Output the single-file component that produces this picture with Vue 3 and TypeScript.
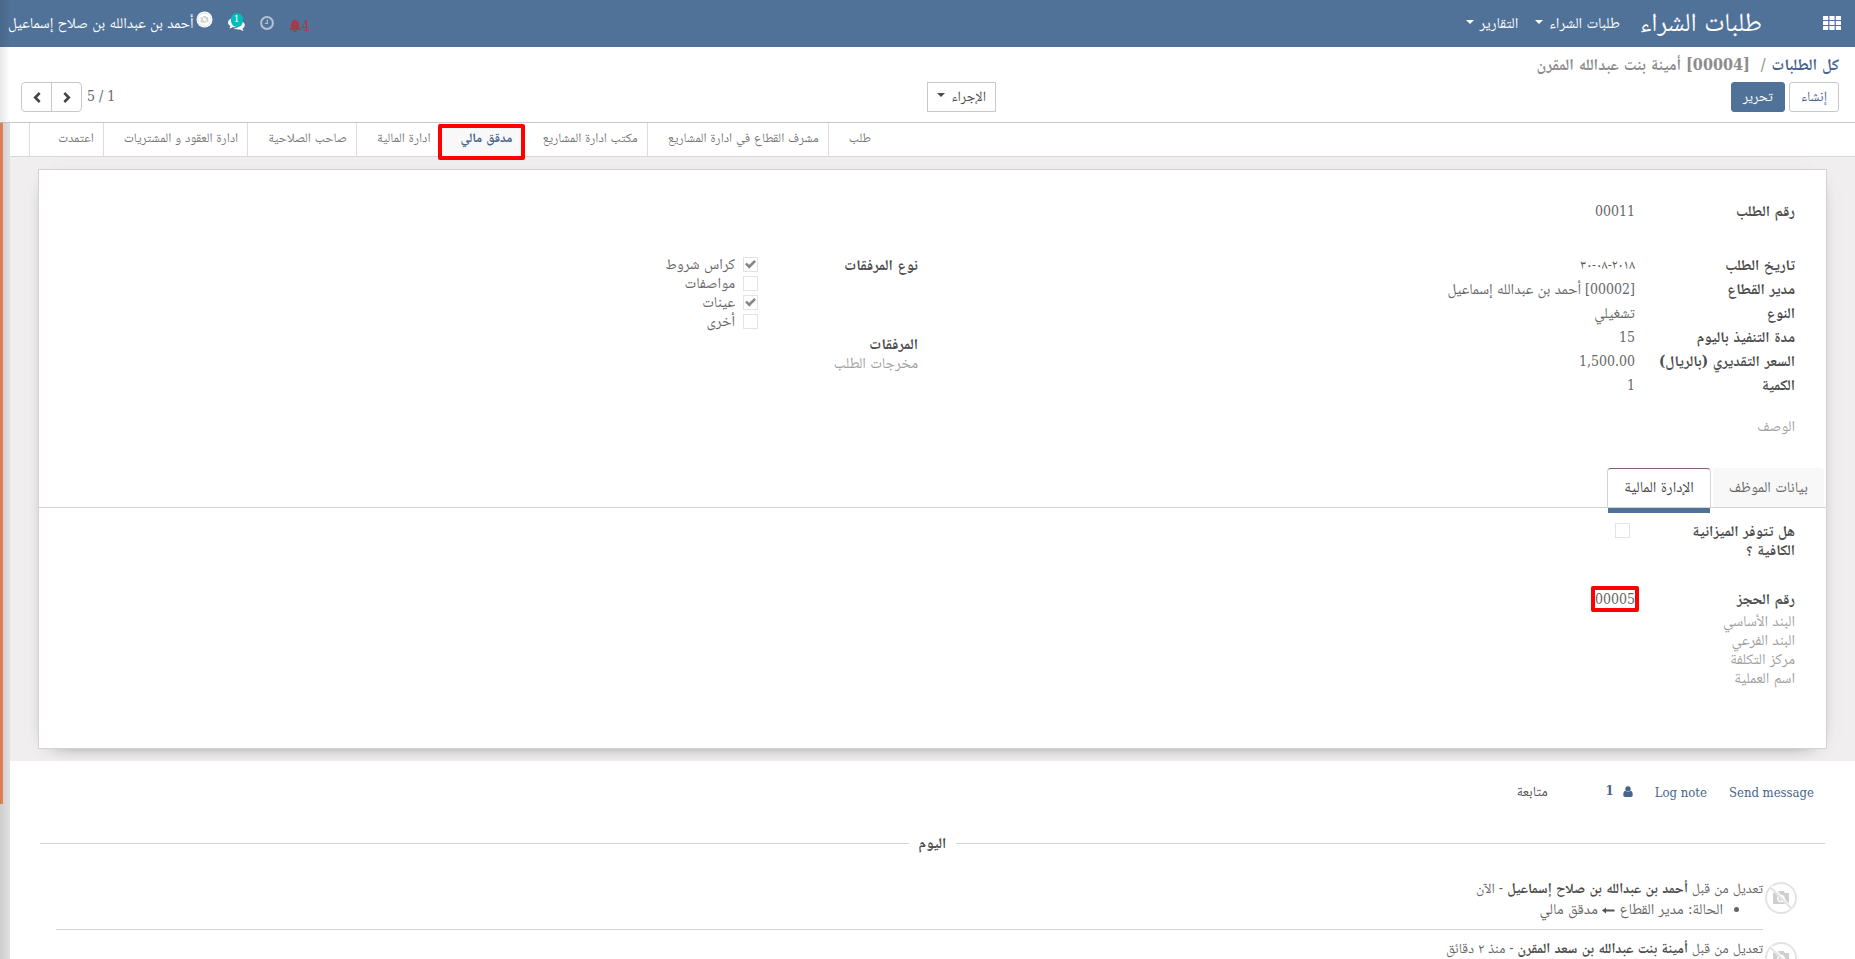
<script setup lang="ts">
interface Row { label: string; value: string; code?: string; kind?: 'num' | 'date' }
interface Stage { name: string; active?: boolean }
interface Message { author: string; when: string; from?: string; to?: string }

const menus: string[] = ['طلبات الشراء', 'التقارير']

const stages: Stage[] = [
  { name: 'طلب' },
  { name: 'مشرف القطاع في ادارة المشاريع' },
  { name: 'مكتب ادارة المشاريع' },
  { name: 'مدقق مالي', active: true },
  { name: 'ادارة المالية' },
  { name: 'صاحب الصلاحية' },
  { name: 'ادارة العقود و المشتريات' },
  { name: 'اعتمدت' },
]

const details: Row[] = [
  { label: 'تاريخ الطلب', value: '٢٠١٨-٠٨-٣٠', kind: 'date' },
  { label: 'مدير القطاع', code: '[00002]', value: 'أحمد بن عبدالله إسماعيل' },
  { label: 'النوع', value: 'تشغيلي' },
  { label: 'مدة التنفيذ باليوم', value: '15', kind: 'num' },
  { label: 'السعر التقديري (بالريال)', value: '1,500.00', kind: 'num' },
  { label: 'الكمية', value: '1', kind: 'num' },
]

const attachments = [
  { id: 'att-terms', label: 'كراس شروط', checked: true },
  { id: 'att-specs', label: 'مواصفات', checked: false },
  { id: 'att-samples', label: 'عينات', checked: true },
  { id: 'att-other', label: 'أخرى', checked: false },
]

const emptyFields: string[] = ['البند الأساسي', 'البند الفرعي', 'مركز التكلفة', 'اسم العملية']

const messages: Message[] = [
  { author: 'أحمد بن عبدالله بن صلاح إسماعيل', when: 'الآن', from: 'مدير القطاع', to: 'مدقق مالي' },
  { author: 'أمينة بنت عبدالله بن سعد المقرن', when: 'منذ ٢ دقائق' },
]
</script>

<template>
  <div class="page" dir="rtl">
    <header class="navbar">
      <button class="icon-btn apps" aria-label="التطبيقات">
        <svg width="18" height="14" viewBox="0 0 18 14" fill="#fff">
          <template v-for="r in 3" :key="r">
            <rect v-for="c in 3" :key="c" :x="(c - 1) * 6.4" :y="(r - 1) * 5" width="5.2" height="4" rx="0.6" />
          </template>
        </svg>
      </button>
      <a class="brand" href="#">طلبات الشراء</a>
      <nav class="menus">
        <a v-for="m in menus" :key="m" href="#">{{ m }}<i class="caret"></i></a>
      </nav>
      <div class="systray">
        <button class="icon-btn bell" aria-label="التنبيهات">
          <span>4</span>
          <svg width="12" height="14" viewBox="0 0 12 14" fill="#a8384b">
            <path d="M6 0.3c.6 0 .9.4.9.9C9 1.7 9.9 3.300 9.900 5c0 3 .8 4.700 2.100 6.100H0C1.300 9.700 2.100 8 2.100 5 2.100 3.300 3 1.700 5.100 1.200 5.100.7 5.400.3 6 .3zM4.200 11.600h3.600c0 1.200-.8 2-1.800 2s-1.800-.8-1.800-2z" />
          </svg>
        </button>
        <button class="icon-btn" aria-label="الأنشطة">
          <svg width="14" height="14" viewBox="0 0 14 14" fill="none" stroke="#b3c2d3">
            <circle cx="7" cy="7" r="5.900" stroke-width="2" />
            <path d="M7.300 3.500v4H4.800" stroke-width="1.200" />
          </svg>
        </button>
        <button class="icon-btn chats" aria-label="المحادثات">
          <svg width="17" height="15" viewBox="0 0 17 15" fill="#fff">
            <path d="M6.500 1C10 1 12.800 3 12.800 5.600S10 10.200 6.500 10.200c-.6 0-1.200 0-1.700-.2-1 .8-2.200 1.300-3.600 1.400.6-.6 1.100-1.400 1.200-2.300C.9 8.300 0 7 0 5.600 0 3 3 1 6.500 1z" />
            <path d="M14.200 4.500c1.500.8 2.600 2.100 2.600 3.600 0 1.400-.9 2.600-2.300 3.400.1.900.6 1.700 1.200 2.300-1.400-.1-2.600-.6-3.600-1.400-2.500.5-5-.1-6.500-1.300 4.700 0 8.600-2.400 8.600-6.600z" />
          </svg>
          <span class="count">1</span>
        </button>
        <button class="icon-btn user">
          <svg width="17" height="17" viewBox="0 0 17 17">
            <circle cx="8.500" cy="8.500" r="8" fill="#fff" />
            <circle cx="8.500" cy="8.500" r="6.500" fill="none" stroke="#e6e6e6" />
            <path d="M4.700 6h2l.8-1h2l.8 1h2v5.500H4.700z" fill="#cfcfcf" />
            <circle cx="8.500" cy="8.500" r="1.700" fill="#f5f5f5" />
            <path d="M4.500 4l8 8.500" stroke="#fff" />
          </svg>
          <span>أحمد بن عبدالله بن صلاح إسماعيل</span>
        </button>
      </div>
    </header>

    <section class="control">
      <ol class="crumbs">
        <li><a href="#">كل الطلبات</a></li>
        <li>[00004] أمينة بنت عبدالله المقرن</li>
      </ol>
      <div class="toolbar">
        <div class="side start">
          <button class="btn">إنشاء</button>
          <button class="btn primary">تحرير</button>
        </div>
        <button class="btn action">الإجراء<i class="caret"></i></button>
        <div class="side end">
          <span class="pages">1 / 5</span>
          <div class="pager">
            <button aria-label="السابق">
              <svg width="8" height="11" viewBox="0 0 8 11" fill="none" stroke="#444" stroke-width="2.600"><path d="M1.300 1l4.500 4.500L1.300 10" /></svg>
            </button>
            <button aria-label="التالي">
              <svg width="8" height="11" viewBox="0 0 8 11" fill="none" stroke="#444" stroke-width="2.600"><path d="M6.700 1L2.200 5.500l4.500 4.500" /></svg>
            </button>
          </div>
        </div>
      </div>
    </section>

    <div class="body">
      <main class="content">
        <div class="statusbar">
          <button v-for="s in stages" :key="s.name" class="stage" :class="{ active: s.active }">
            {{ s.name }}<span v-if="s.active" class="mark"></span>
          </button>
        </div>

        <div class="sheet-bg">
          <div class="sheet">
            <div class="fields">
              <div class="row first"><b>رقم الطلب</b><span class="num">00011</span></div>
              <div class="cols">
                <div>
                  <div v-for="d in details" :key="d.label" class="row">
                    <b>{{ d.label }}</b>
                    <span :class="d.kind"><span v-if="d.code" class="num">{{ d.code }}&nbsp;</span>{{ d.value }}</span>
                  </div>
                </div>
                <div>
                  <div class="row kinds">
                    <b>نوع المرفقات</b>
                    <div class="checks">
                      <div v-for="a in attachments" :key="a.id" class="check">
                        <input :id="a.id" type="checkbox" :checked="a.checked" />
                        <label :for="a.id">{{ a.label }}</label>
                      </div>
                    </div>
                  </div>
                  <div class="tight"><b>المرفقات</b></div>
                  <div class="tight muted">مخرجات الطلب</div>
                </div>
              </div>
              <div class="row description"><span class="muted">الوصف</span></div>
            </div>

            <div class="tabs" role="tablist">
              <button role="tab" aria-selected="false">بيانات الموظف</button>
              <button role="tab" aria-selected="true" class="current">الإدارة المالية</button>
            </div>

            <div class="panel">
              <div class="row question">
                <label for="budget">هل تتوفر الميزانية الكافية ؟</label>
                <input id="budget" type="checkbox" />
              </div>
              <div class="row booking"><b>رقم الحجز</b><span class="num"><span class="boxed">00005<i class="mark"></i></span></span></div>
              <div v-for="f in emptyFields" :key="f" class="tight muted">{{ f }}</div>
            </div>
          </div>
        </div>

        <section class="chatter">
          <div class="chat-bar">
            <button class="link">Send message</button>
            <button class="link">Log note</button>
            <button class="link followers">
              <svg width="10" height="11" viewBox="0 0 10 11" fill="#46648c">
                <circle cx="5" cy="2.900" r="2.700" />
                <path d="M2.300 4.800c1.500 1.500 3.900 1.500 5.400 0C9.300 5.200 9.700 6.800 9.700 9c0 1.200-.7 1.900-1.800 1.900H2.100C1 10.900.3 10.200.3 9c0-2.200.4-3.800 2-4.200z" />
              </svg>
              <span>1</span>
            </button>
            <button class="link follow">متابعة</button>
          </div>
          <div class="divider"><b>اليوم</b></div>
          <article v-for="m in messages" :key="m.author" class="message">
            <svg class="avatar" width="32" height="32" viewBox="0 0 32 32">
              <circle cx="16" cy="16" r="15" fill="#fff" stroke="#e3e3e3" stroke-width="2" />
              <path d="M8 11h4l1.500-2h5l1.500 2h4v11H8z" fill="#cfcfcf" />
              <circle cx="16" cy="16.500" r="3.800" fill="#fff" />
              <circle cx="16" cy="16.500" r="2.400" fill="#cfcfcf" />
              <path d="M6 4.500L27 27" stroke="#fff" stroke-width="3" />
              <path d="M5.200 5.200L26.800 26.800" stroke="#e3e3e3" stroke-width="2" />
            </svg>
            <div class="text">
              <p>تعديل من قبل <b>{{ m.author }}</b> - {{ m.when }}</p>
              <ul v-if="m.from">
                <li>الحالة: {{ m.from }}
                  <svg width="13" height="7" viewBox="0 0 13 7" fill="#555"><path d="M0 3.500L4 .5v2h8.500v2H4v2z" /></svg>
                  {{ m.to }}</li>
              </ul>
            </div>
          </article>
        </section>
      </main>
      <aside class="gutter"><div class="thumb"></div></aside>
    </div>
  </div>
</template>

<style>
html, body { margin: 0; overflow: hidden; height: 100%; }
#app { height: 100%; }
</style>

<style scoped>
* { box-sizing: border-box; }
.page {
  height: 100%;
  display: flex;
  flex-direction: column;
  overflow: hidden;
  position: relative;
  background: #fff;
  color: #666;
  font-family: "DejaVu Serif Condensed", "DejaVu Serif", "Droid Arabic Naskh", "Noto Naskh Arabic", serif;
  font-size: 15px;
  line-height: 24px;
}
.page::after {
  content: "";
  position: absolute;
  inset: 0 auto 0 0;
  width: 10px;
  pointer-events: none;
  background: linear-gradient(to right, rgba(0, 0, 0, 0.09), rgba(0, 0, 0, 0));
}
button { font: inherit; color: inherit; background: none; border: 0; padding: 0; margin: 0; }
a { text-decoration: none; color: inherit; }
b, label { color: #4c4c4c; font-weight: 700; }
.num { font-size: 14px; }
.date { font-size: 13px; color: #555; }
.caret {
  display: inline-block;
  border: 4px solid transparent;
  border-top-color: currentColor;
  border-bottom: 0;
  margin-inline-start: 6px;
  vertical-align: 4px;
}

.navbar {
  flex: none;
  height: 47px;
  padding: 0 14px 2px 8px;
  display: flex;
  align-items: center;
  background: #507298;
  color: #fff;
}
.icon-btn { display: flex; align-items: center; }
.brand { font-size: 26px; margin-inline-start: 61px; padding-bottom: 2px; }
.menus { display: flex; gap: 17px; margin-inline-start: 20px; flex: 1; }
.systray { display: flex; align-items: center; gap: 15px; }
.bell { color: #a8384b; gap: 1px; padding-top: 6px; font-size: 14px; }
.chats { position: relative; padding-top: 3px; }
.count {
  position: absolute;
  left: 3px;
  top: -1px;
  width: 12px;
  height: 14px;
  border-radius: 7px;
  background: #00bdb9;
  font-size: 10px;
  line-height: 12px;
  text-align: center;
}
.user { gap: 2px; align-items: flex-start; }

.control { flex: none; padding: 5px 16px 10px 21px; border-bottom: 1px solid #c8c8c8; }
.crumbs { list-style: none; margin: 0; padding: 0; display: flex; font-weight: 700; font-size: 16px; line-height: 26px; color: #8c8c8c; }
.crumbs a { color: #46648c; }
.crumbs li + li::before { content: "/"; font-weight: 400; padding: 0 6px 0 11px; }
.toolbar { display: flex; align-items: center; padding-top: 4px; }
.side { flex: 1; display: flex; align-items: center; gap: 4px; }
.start { flex: 0 0 calc(50% - 66px); }
.end { justify-content: flex-end; gap: 5px; }
.pages { font-size: 14px; padding-bottom: 3px; }
.btn { height: 30px; padding: 0 11px 2px; border: 1px solid #c8c8c8; border-radius: 3px; font-size: 14px; color: #46648c; }
.primary { background: #507298; border-color: #507298; color: #fff; }
.action { border-radius: 0; padding: 0 9px 2px; color: #4c4c4c; }
.pager { display: flex; border: 1px solid #c8c8c8; border-radius: 4px; height: 30px; }
.pager button { width: 29px; display: grid; place-items: center; }
.pager button + button { border-right: 1px solid #c8c8c8; width: 30px; }

.body { flex: 1; min-height: 0; display: flex; }
.content { flex: 1; min-width: 0; }
.gutter { width: 10px; background: #e1e1e1; }
.thumb { width: 3px; height: 681px; max-height: 100%; margin-right: auto; background: #f0875f; }

.statusbar { display: flex; height: 34px; border-bottom: 1px solid #d9d7d7; padding-inline-start: calc(53% - 3px); }
.stage { position: relative; flex: none; padding: 0 9px 3px 20px; font-size: 13px; color: #777; border-left: 1px solid #ddd; white-space: nowrap; }
.stage:last-child { padding-left: 28px; }
.active { color: #46648c; font-weight: 700; background: #f8f8f8; }
.mark { position: absolute; border: 4px solid #f00; border-radius: 2px; pointer-events: none; }
.stage .mark { inset: 1px -4px -4px -2px; z-index: 1; }

.sheet-bg { background: #f0eeee; padding: 12px 28px 12px 28px; overflow: hidden; }
.sheet { background: #fff; border: 1px solid #d4d2d2; box-shadow: 0 5px 20px -15px #000; padding-bottom: 60px; }
.fields { padding: 29px 31px 30px 2px; }
.row { display: grid; grid-template-columns: 160px 1fr; min-height: 24px; }
.first { margin-bottom: 30px; }
.cols { display: grid; grid-template-columns: 1fr 1fr; }
.kinds { margin-bottom: 4px; }
.checks { padding-top: 2px; }
.check { display: flex; align-items: center; height: 19px; gap: 8px; line-height: 19px; }
.check label { font-weight: 400; color: #666; }
input[type="checkbox"] { appearance: none; width: 15px; height: 15px; margin: 0; border: 1px solid #e3e3e3; background: #fff; display: grid; place-items: center; }
input[type="checkbox"]:checked::before {
  content: "";
  width: 11px;
  height: 9px;
  background: #888;
  clip-path: polygon(0 48%, 16% 30%, 38% 54%, 84% 0, 100% 20%, 39% 96%);
}
.tight { line-height: 19px; }
.muted { color: #a0a0a0; }
.description { margin-top: 17px; }

.tabs { display: flex; align-items: flex-end; gap: 2px; padding-inline-start: 2px; border-bottom: 1px solid #d4d2d2; }
.tabs button { height: 39px; padding: 0 16px 2px; background: #f8f8f8; border-radius: 4px 4px 0 0; }
.tabs .current { position: relative; background: #fff; color: #444; border: 1px solid #d4d2d2; border-top-color: #875a7b; border-bottom: 0; }
.current::after { content: ""; position: absolute; inset: auto 0 -6px 0; height: 5px; background: #507298; }
.panel { padding: 14px 31px 0 2px; }
.question { line-height: 19px; margin-bottom: 27px; }
.question label { width: 110px; }
.question input { margin: 1px 5px; }
.booking { margin-bottom: 1px; }
.boxed { position: relative; }
.boxed .mark { inset: -5px -4px; }

.chatter { padding: 18px 30px 0 30px; }
.chat-bar { display: flex; align-items: center; padding: 0 11px; }
.link { color: #46648c; font-size: 13px; }
.link + .link { margin-inline-start: 22px; }
.followers { display: flex; align-items: center; gap: 9px; font-weight: 700; padding-bottom: 3px; }
.link.follow { color: #4c4c4c; font-size: 14px; margin-inline-start: 58px; padding-bottom: 3px; }
.divider { display: flex; align-items: center; gap: 10px; margin: 25px 0 23px; }
.divider::before, .divider::after { content: ""; flex: 1; border-top: 1px solid #d4d2d2; }
.message { display: flex; gap: 2px; padding: 0 28px 0 16px; }
.avatar { flex: none; margin-top: 4px; }
.text { flex: 1; border-bottom: 1px solid #d4d2d2; padding-bottom: 9px; margin-bottom: 8px; line-height: 21px; }
.text p { margin: 0; font-size: 14px; }
.text ul { margin: 0; padding-inline-start: 40px; }
</style>
